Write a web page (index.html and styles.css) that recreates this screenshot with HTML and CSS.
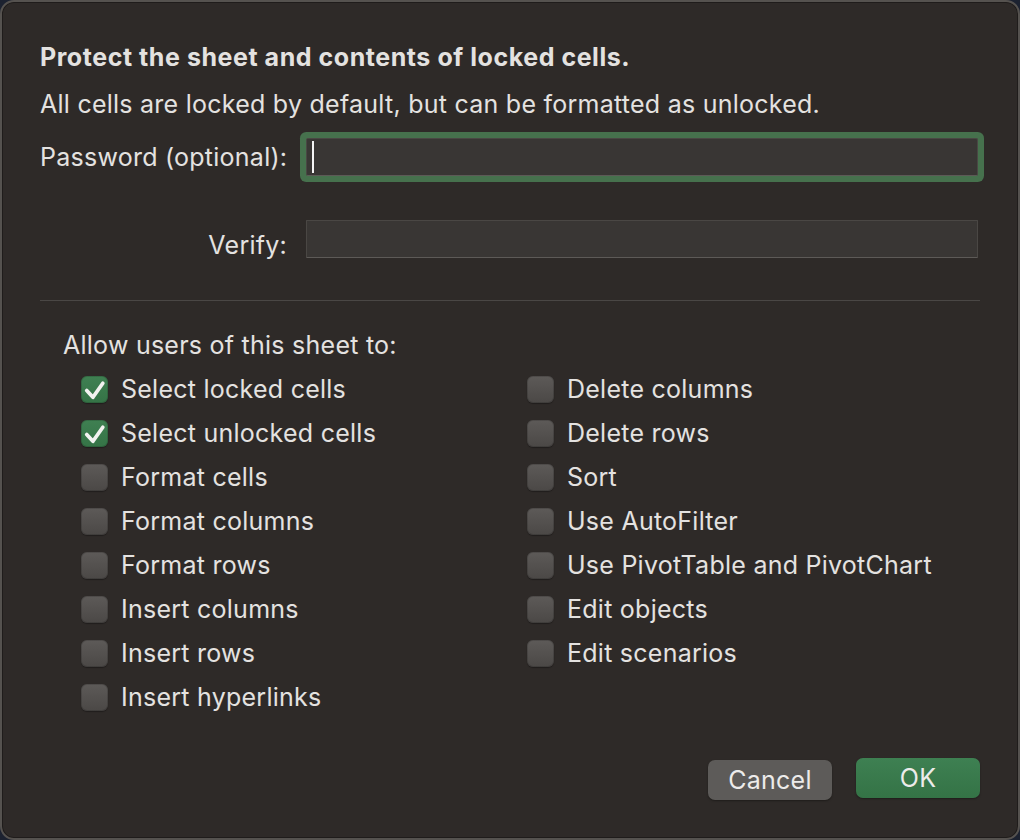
FILE: index.html
```html
<!DOCTYPE html>
<html lang="en">
<head>
<meta charset="utf-8">
<title>Protect Sheet</title>
<link rel="stylesheet" href="styles.css">
</head>
<body>
<div class="dialog">
  <h1 class="title">Protect the sheet and contents of locked cells.</h1>
  <p class="subtitle">All cells are locked by default, but can be formatted as unlocked.</p>
  <div class="fields">
    <label class="field-label">Password (optional):</label>
    <div class="input focused"><span class="caret"></span></div>
    <label class="field-label verify-label">Verify:</label>
    <div class="input verify"></div>
  </div>
  <div class="separator"></div>
  <div class="allow">Allow users of this sheet to:</div>
  <div class="options">
    <div class="col">
      <div class="opt"><span class="box checked"><svg viewBox="0 0 26 26"><path d="M5.5 14 L11.5 20.5 L21 7" fill="none" stroke="#f2f2f0" stroke-width="3.6" stroke-linecap="round" stroke-linejoin="round"/></svg></span>Select locked cells</div>
      <div class="opt"><span class="box checked"><svg viewBox="0 0 26 26"><path d="M5.5 14 L11.5 20.5 L21 7" fill="none" stroke="#f2f2f0" stroke-width="3.6" stroke-linecap="round" stroke-linejoin="round"/></svg></span>Select unlocked cells</div>
      <div class="opt"><span class="box"></span>Format cells</div>
      <div class="opt"><span class="box"></span>Format columns</div>
      <div class="opt"><span class="box"></span>Format rows</div>
      <div class="opt"><span class="box"></span>Insert columns</div>
      <div class="opt"><span class="box"></span>Insert rows</div>
      <div class="opt"><span class="box"></span>Insert hyperlinks</div>
    </div>
    <div class="col">
      <div class="opt"><span class="box"></span>Delete columns</div>
      <div class="opt"><span class="box"></span>Delete rows</div>
      <div class="opt"><span class="box"></span>Sort</div>
      <div class="opt"><span class="box"></span>Use AutoFilter</div>
      <div class="opt"><span class="box"></span>Use PivotTable and PivotChart</div>
      <div class="opt"><span class="box"></span>Edit objects</div>
      <div class="opt"><span class="box"></span>Edit scenarios</div>
    </div>
  </div>
  <div class="buttons">
    <button class="btn cancel">Cancel</button>
    <button class="btn ok">OK</button>
  </div>
</div>
</body>
</html>
```

FILE: styles.css
```css
html, body {
  margin: 0;
  padding: 0;
  background: #1c2230;
}
body {
  width: 1020px;
  height: 840px;
  overflow: hidden;
  font-family: Inter, "Noto Sans", sans-serif;
  color: #e4e2e0;
}
.dialog {
  box-sizing: border-box;
  width: 1020px;
  height: 840px;
  background: #2e2a28;
  border: 2px solid #55524f;
  border-radius: 14px;
  box-shadow: inset 0 0 0 1px #1f1c1b;
  padding: 40px 38px 38px 38px;
  display: flex;
  flex-direction: column;
  font-size: 25px;
  letter-spacing: 0.25px;
}
.title {
  margin: 0;
  font-size: 25px;
  font-weight: 700;
  line-height: 30px;
  letter-spacing: 0.55px;
}
.subtitle {
  margin: 17px 0 0 0;
  line-height: 30px;
  font-weight: 400;
}
.fields {
  margin-top: 19px;
  display: grid;
  grid-template-columns: 247px 672px;
  column-gap: 19px;
  row-gap: 44px;
  align-items: center;
}
.field-label {
  line-height: 38px;
  text-align: right;
  white-space: nowrap;
}
.verify-label {
  position: relative;
  top: 6px;
}
.input {
  box-sizing: border-box;
  height: 38px;
  background: #393634;
  border: 1px solid #4a4744;
  border-bottom-color: #5d5a57;
  border-radius: 1px;
  position: relative;
}
.input.focused {
  box-shadow: 0 0 0 6px #46714d;
  border-radius: 2px;
}
.caret {
  position: absolute;
  left: 5px;
  top: 2px;
  width: 2px;
  height: 32px;
  background: #f4f4f4;
}
.separator {
  margin-top: 42px;
  height: 1px;
  background: #4a4745;
}
.allow {
  margin-top: 29px;
  padding-left: 23px;
  line-height: 30px;
}
.options {
  margin-top: 7px;
  padding-left: 41px;
  display: grid;
  grid-template-columns: 446px 1fr;
}
.opt {
  display: flex;
  align-items: center;
  height: 44px;
  white-space: nowrap;
}
.box {
  box-sizing: border-box;
  width: 27px;
  height: 27px;
  border-radius: 6px;
  background: linear-gradient(#5d5a58, #4b4846);
  box-shadow: inset 0 0 0 1px rgba(0,0,0,0.15), 0 1px 1px rgba(0,0,0,0.3);
  margin-right: 13px;
  flex: none;
  display: flex;
}
.box svg {
  width: 27px;
  height: 27px;
}
.box.checked {
  background: linear-gradient(#3f8052, #357346);
}
.buttons {
  margin-top: auto;
  display: flex;
  justify-content: flex-end;
  align-items: flex-start;
  gap: 24px;
}
.btn {
  width: 124px;
  height: 40px;
  border: none;
  border-radius: 7px;
  font-family: Inter, "Noto Sans", sans-serif;
  font-size: 25px;
  letter-spacing: 0.25px;
  color: #ecebea;
  padding: 0;
  box-shadow: 0 1px 2px rgba(0,0,0,0.35);
}
.cancel {
  margin-top: 2px;
  background: #5d5b59;
}
.ok {
  background: linear-gradient(#3e8052, #347346);
}
```
